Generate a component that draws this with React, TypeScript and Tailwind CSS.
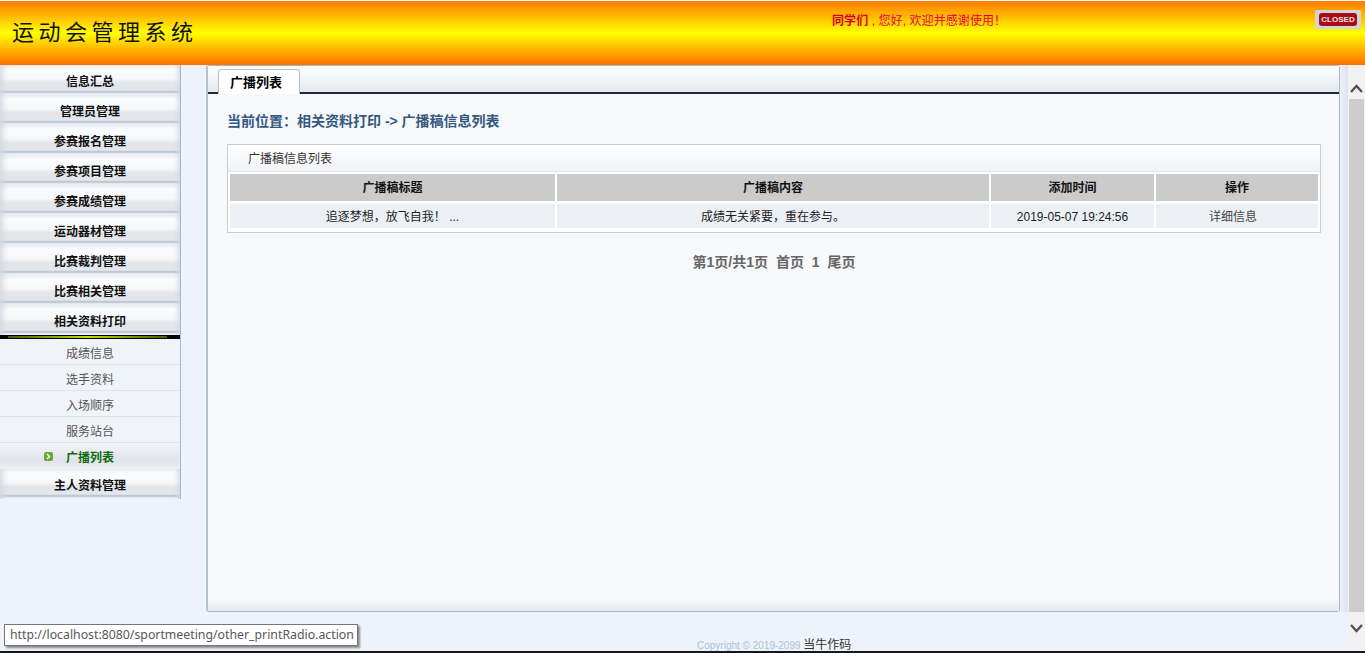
import React from "react";

const font = "font-['Liberation_Sans','Noto_Sans_CJK_SC',sans-serif]";

const topMenu = ["信息汇总", "管理员管理", "参赛报名管理", "参赛项目管理", "参赛成绩管理", "运动器材管理", "比赛裁判管理", "比赛相关管理", "相关资料打印"];
const subMenu = ["成绩信息", "选手资料", "入场顺序", "服务站台"];

const MenuHead = ({ label }: { label: string }) => (
  <div className="h-[30px] bg-[linear-gradient(#e9ecf1_0%,#fbfcfd_15%,#f6f8fa_45%,#e2e5ea_60%,#e3e6eb_84%,#bcc8d5_88%,#c3ceda_92%,#eef1f5_96%)] pt-[9px] text-center text-[12px] leading-[16px] font-bold text-[#111] shadow-[inset_8px_0_6px_-5px_#d3d9e2,inset_-6px_0_5px_-4px_#d3d9e2]">
    {label}
  </div>
);

const Chevron = ({ up }: { up?: boolean }) => (
  <svg width="13" height="9" viewBox="0 0 13 9" fill="none" stroke="#505050" strokeWidth="2.4">
    <path d={up ? "M1 8 L6.5 2 L12 8" : "M1 1 L6.5 7 L12 1"} />
  </svg>
);

export default function App() {
  return (
    <div className={`${font} relative flex h-[653px] w-[1365px] flex-col overflow-hidden bg-[#eef3fb]`}>
      {/* Header */}
      <div className="flex h-[65px] shrink-0 border-t border-t-white bg-[linear-gradient(#ff7b00_0%,#ffff00_50%,#ff6f00_100%)]">
        <div className="w-[832px] pt-[17px] pl-[12px] text-[22px] leading-[30px] tracking-[4.5px] text-[#111]">运动会管理系统</div>
        <div className="flex-1 pt-[12px] text-[12px] leading-[16px] tracking-[0.08px] text-[#e8003a]">
          <b className="text-[#d9001f]">同学们</b> , 您好, 欢迎并感谢使用！
        </div>
        <div className="mt-[9px] mr-[4px] flex h-[19px] w-[46px] items-center justify-center rounded-[2px] bg-[#d2d4d8]">
          <div className="flex h-[13px] w-[38px] items-center justify-center rounded-[3px] bg-[#a80d16] text-[8px] font-bold text-[#f4e4e4]">CLOSED</div>
        </div>
      </div>

      <div className="flex min-h-0 flex-1">
        {/* Sidebar */}
        <div className="w-[181px] shrink-0">
          <div className="border-r border-[#a9b8c6]">
            {topMenu.map((m) => (
              <MenuHead key={m} label={m} />
            ))}
            <div className="flex h-[4px] items-stretch bg-black pr-[13px] pl-[8px]">
              <div className="my-[1px] flex-1 bg-[linear-gradient(90deg,#4c5c00,#c0e000_50%,#4c5c00)]" />
            </div>
            {subMenu.map((m) => (
              <div key={m} className="h-[26px] border-b border-[#dfe3e8] bg-[#f0f3f8] pt-[7px] text-center text-[12px] leading-[16px] text-[#555]">
                {m}
              </div>
            ))}
            <div className="relative h-[26px] bg-[linear-gradient(#f2f4f8,#dfe3ea_70%,#eef1f5)] pt-[7px] text-center text-[12px] leading-[16px] font-bold text-[#0f6a0f]">
              <span className="absolute top-[9px] left-[44px] flex h-[9px] w-[9px] items-center justify-center rounded-[2px] bg-[#6aa832]">
                <svg width="5" height="7" viewBox="0 0 5 7" fill="none" stroke="#fff" strokeWidth="1.4">
                  <path d="M1 1 L3.5 3.5 L1 6" />
                </svg>
              </span>
              广播列表
            </div>
            <MenuHead label="主人资料管理" />
          </div>
        </div>

        {/* Main panel */}
        <div className="ml-[25px] flex h-[547px] w-[1134px] flex-col rounded-[3px] border border-l-2 border-[#a9b8c6] border-l-[#b5c2d0] bg-[#f7f8fa]">
          <div className="flex h-[28px] shrink-0 items-end border-b-2 border-b-[#1c2b38] bg-[linear-gradient(#ffffff,#e4e9ef)] pl-[10px]">
            <div className="mb-[-2px] h-[25px] w-[82px] rounded-t-[3px] border border-b-0 border-[#b4c0cc] bg-white pt-[5px] pl-[11px] text-[13px] leading-[16px] font-bold text-black">
              广播列表
            </div>
          </div>
          <div className="flex-1 pt-[18px] pr-[18px] pl-[19px]">
            <div className="text-[14px] leading-[18px] font-bold text-[#34597f]">当前位置：相关资料打印 -&gt; 广播稿信息列表</div>
            <div className="mt-[14px] border border-[#cccccc] bg-white">
              <div className="h-[26px] bg-[linear-gradient(#ffffff,#f0f2f5)] pt-[6px] pl-[20px] text-[12px] leading-[16px] text-[#333]">广播稿信息列表</div>
              <div className="border-t border-[#e4e7ea] px-[2px] pt-[2px] pb-[4px]">
                <div className="grid grid-cols-[325px_432px_163px_162px] gap-x-[2px] gap-y-[3px] text-center text-[12px] text-[#222]">
                  {["广播稿标题", "广播稿内容", "添加时间", "操作"].map((h) => (
                    <div key={h} className="h-[27px] bg-[#cbcbcb] leading-[29px] font-bold text-[#111]">
                      {h}
                    </div>
                  ))}
                  <div className="h-[24px] bg-[#ecf0f5] leading-[26px]">追逐梦想，放飞自我！ ...</div>
                  <div className="h-[24px] bg-[#ecf0f5] leading-[26px]">成绩无关紧要，重在参与。</div>
                  <div className="h-[24px] bg-[#ecf0f5] leading-[26px]">2019-05-07 19:24:56</div>
                  <div className="h-[24px] bg-[#ecf0f5] pr-[8px] leading-[26px] text-[#444]">详细信息</div>
                </div>
              </div>
            </div>
            <div className="mt-[20px] text-center text-[14px] leading-[18px] font-bold text-[#666] [word-spacing:4px]">第1页/共1页 首页 1 尾页</div>
          </div>
          <div className="h-[12px] shrink-0 bg-[linear-gradient(#f7f8fa,#e6eaee)]" />
        </div>

        {/* Scrollbar */}
        <div className="flex h-[547px] w-[8px] shrink-0 bg-[linear-gradient(90deg,#eef1f8,#dde2ee)]" />
        <div className="flex w-[17px] shrink-0 flex-col items-center bg-[#f1f1f1]">
          <div className="flex h-[34px] shrink-0 items-center justify-center pt-[12px]">
            <Chevron up />
          </div>
          <div className="h-[513px] w-[15px] shrink-0 bg-[#cdcdcd]" />
          <div className="flex flex-1 items-center justify-center pb-[6px]">
            <Chevron />
          </div>
        </div>
      </div>
      <div className="h-[2px] shrink-0 bg-[#14181c]" />

      {/* Footer */}
      <div className="absolute top-[638px] left-[697px] text-[10px] leading-[14px] text-[#a9c4cf]">
        Copyright © 2019-2099 <span className="text-[12px] text-[#333]">当牛作码</span>
      </div>

      {/* Status tooltip */}
      <div className="absolute top-[624px] left-[4px] h-[22px] w-[354px] border border-[#767676] bg-white pl-[5px] font-['Noto_Sans',sans-serif] text-[12.3px] leading-[19px] text-[#575757] shadow-[2px_2px_2px_#888]">
        http://localhost:8080/sportmeeting/other_printRadio.action
      </div>
    </div>
  );
}
